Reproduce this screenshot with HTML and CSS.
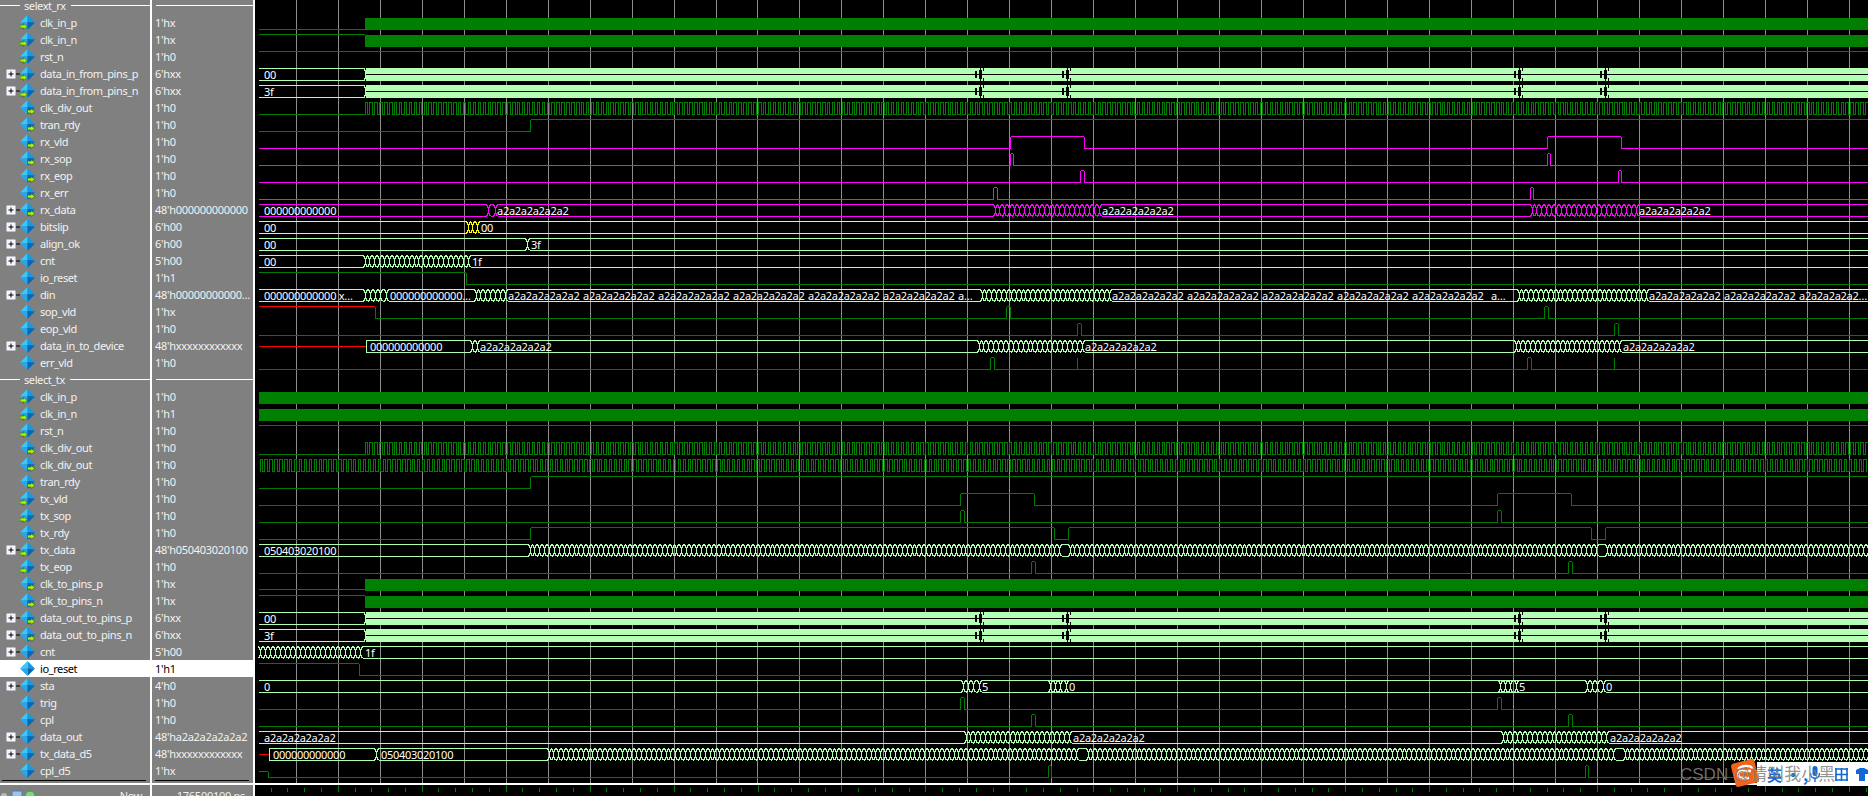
FILE: index.html
```html
<!DOCTYPE html>
<html lang="en">
<head>
<meta charset="utf-8">
<title>Wave</title>
<link rel="stylesheet" href="styles.css">
</head>
<body>
<svg class="defs" aria-hidden="true">
  <symbol id="dia" viewBox="0 0 15 15">
    <polygon points="0,7.5 7.5,0 7.5,7" fill="#3cc8f6"/>
    <polygon points="7.5,0 15,7.5 7.5,7" fill="#129ae2"/>
    <polygon points="0,7.5 7.5,7 7.5,15" fill="#28a6e8"/>
    <polygon points="7.5,7 15,7.5 7.5,15" fill="#0567b6"/>
  </symbol>
  <symbol id="in" viewBox="0 0 15 15">
    <use href="#dia" width="15" height="15"/>
    <polygon points="0,10 3.5,10 3.5,8.5 7.5,11.5 3.5,14.5 3.5,13 0,13" fill="#a8f010" stroke="#2d5a10" stroke-width=".6"/>
  </symbol>
  <symbol id="out" viewBox="0 0 15 15">
    <use href="#dia" width="15" height="15"/>
    <polygon points="7.5,10 11,10 11,8.5 15,11.5 11,14.5 11,13 7.5,13" fill="#a8f010" stroke="#2d5a10" stroke-width=".6"/>
  </symbol>
  <symbol id="plus" viewBox="0 0 14 10">
    <rect x=".5" y=".5" width="9" height="9" rx="1" fill="#f4f6fb" stroke="#b9bdc8"/>
    <path d="M2.5 5H7.5M5 2.5V7.5M10 5H14" stroke="#000" fill="none"/>
  </symbol>
</svg>

<div class="app">
  <section class="pane names">
    <div class="list">
      <div class="row hdr"><span>selext_rx</span></div>
      <div class="row"><i class="exp"></i><svg class="ico"><use href="#in"/></svg><span>clk_in_p</span></div>
      <div class="row"><i class="exp"></i><svg class="ico"><use href="#in"/></svg><span>clk_in_n</span></div>
      <div class="row"><i class="exp"></i><svg class="ico"><use href="#in"/></svg><span>rst_n</span></div>
      <div class="row"><svg class="exp"><use href="#plus"/></svg><svg class="ico"><use href="#in"/></svg><span>data_in_from_pins_p</span></div>
      <div class="row"><svg class="exp"><use href="#plus"/></svg><svg class="ico"><use href="#in"/></svg><span>data_in_from_pins_n</span></div>
      <div class="row"><i class="exp"></i><svg class="ico"><use href="#out"/></svg><span>clk_div_out</span></div>
      <div class="row"><i class="exp"></i><svg class="ico"><use href="#out"/></svg><span>tran_rdy</span></div>
      <div class="row"><i class="exp"></i><svg class="ico"><use href="#out"/></svg><span>rx_vld</span></div>
      <div class="row"><i class="exp"></i><svg class="ico"><use href="#out"/></svg><span>rx_sop</span></div>
      <div class="row"><i class="exp"></i><svg class="ico"><use href="#out"/></svg><span>rx_eop</span></div>
      <div class="row"><i class="exp"></i><svg class="ico"><use href="#out"/></svg><span>rx_err</span></div>
      <div class="row"><svg class="exp"><use href="#plus"/></svg><svg class="ico"><use href="#out"/></svg><span>rx_data</span></div>
      <div class="row"><svg class="exp"><use href="#plus"/></svg><svg class="ico"><use href="#dia"/></svg><span>bitslip</span></div>
      <div class="row"><svg class="exp"><use href="#plus"/></svg><svg class="ico"><use href="#dia"/></svg><span>align_ok</span></div>
      <div class="row"><svg class="exp"><use href="#plus"/></svg><svg class="ico"><use href="#dia"/></svg><span>cnt</span></div>
      <div class="row"><i class="exp"></i><svg class="ico"><use href="#dia"/></svg><span>io_reset</span></div>
      <div class="row"><svg class="exp"><use href="#plus"/></svg><svg class="ico"><use href="#dia"/></svg><span>din</span></div>
      <div class="row"><i class="exp"></i><svg class="ico"><use href="#dia"/></svg><span>sop_vld</span></div>
      <div class="row"><i class="exp"></i><svg class="ico"><use href="#dia"/></svg><span>eop_vld</span></div>
      <div class="row"><svg class="exp"><use href="#plus"/></svg><svg class="ico"><use href="#dia"/></svg><span>data_in_to_device</span></div>
      <div class="row"><i class="exp"></i><svg class="ico"><use href="#dia"/></svg><span>err_vld</span></div>
      <div class="row hdr"><span>select_tx</span></div>
      <div class="row"><i class="exp"></i><svg class="ico"><use href="#in"/></svg><span>clk_in_p</span></div>
      <div class="row"><i class="exp"></i><svg class="ico"><use href="#in"/></svg><span>clk_in_n</span></div>
      <div class="row"><i class="exp"></i><svg class="ico"><use href="#in"/></svg><span>rst_n</span></div>
      <div class="row"><i class="exp"></i><svg class="ico"><use href="#out"/></svg><span>clk_div_out</span></div>
      <div class="row"><i class="exp"></i><svg class="ico"><use href="#out"/></svg><span>clk_div_out</span></div>
      <div class="row"><i class="exp"></i><svg class="ico"><use href="#out"/></svg><span>tran_rdy</span></div>
      <div class="row"><i class="exp"></i><svg class="ico"><use href="#in"/></svg><span>tx_vld</span></div>
      <div class="row"><i class="exp"></i><svg class="ico"><use href="#in"/></svg><span>tx_sop</span></div>
      <div class="row"><i class="exp"></i><svg class="ico"><use href="#out"/></svg><span>tx_rdy</span></div>
      <div class="row"><svg class="exp"><use href="#plus"/></svg><svg class="ico"><use href="#in"/></svg><span>tx_data</span></div>
      <div class="row"><i class="exp"></i><svg class="ico"><use href="#in"/></svg><span>tx_eop</span></div>
      <div class="row"><i class="exp"></i><svg class="ico"><use href="#out"/></svg><span>clk_to_pins_p</span></div>
      <div class="row"><i class="exp"></i><svg class="ico"><use href="#out"/></svg><span>clk_to_pins_n</span></div>
      <div class="row"><svg class="exp"><use href="#plus"/></svg><svg class="ico"><use href="#out"/></svg><span>data_out_to_pins_p</span></div>
      <div class="row"><svg class="exp"><use href="#plus"/></svg><svg class="ico"><use href="#out"/></svg><span>data_out_to_pins_n</span></div>
      <div class="row"><svg class="exp"><use href="#plus"/></svg><svg class="ico"><use href="#dia"/></svg><span>cnt</span></div>
      <div class="row sel"><i class="exp"></i><svg class="ico"><use href="#dia"/></svg><span>io_reset</span></div>
      <div class="row"><svg class="exp"><use href="#plus"/></svg><svg class="ico"><use href="#dia"/></svg><span>sta</span></div>
      <div class="row"><i class="exp"></i><svg class="ico"><use href="#dia"/></svg><span>trig</span></div>
      <div class="row"><i class="exp"></i><svg class="ico"><use href="#dia"/></svg><span>cpl</span></div>
      <div class="row"><svg class="exp"><use href="#plus"/></svg><svg class="ico"><use href="#dia"/></svg><span>data_out</span></div>
      <div class="row"><svg class="exp"><use href="#plus"/></svg><svg class="ico"><use href="#dia"/></svg><span>tx_data_d5</span></div>
      <div class="row"><i class="exp"></i><svg class="ico"><use href="#dia"/></svg><span>cpl_d5</span></div>
    </div>
    <div class="scroll"></div>
    <div class="band"></div>
    <div class="foot">
      <svg class="status" viewBox="0 0 36 11">
        <circle cx="4" cy="6" r="3" fill="#b8b8b8"/>
        <rect x="12" y="1" width="10" height="10" fill="#9cc4ea" stroke="#4a78b0"/>
        <circle cx="30" cy="6" r="5" fill="#7ed67e" stroke="#3e9c3e"/>
      </svg>
      <span>Now</span>
    </div>
  </section>

  <section class="pane values">
    <div class="list">
      <div class="row hdr"></div>
      <div class="row">1'hx</div>
      <div class="row">1'hx</div>
      <div class="row">1'h0</div>
      <div class="row">6'hxx</div>
      <div class="row">6'hxx</div>
      <div class="row">1'h0</div>
      <div class="row">1'h0</div>
      <div class="row">1'h0</div>
      <div class="row">1'h0</div>
      <div class="row">1'h0</div>
      <div class="row">1'h0</div>
      <div class="row">48'h000000000000</div>
      <div class="row">6'h00</div>
      <div class="row">6'h00</div>
      <div class="row">5'h00</div>
      <div class="row">1'h1</div>
      <div class="row">48'h00000000000...</div>
      <div class="row">1'hx</div>
      <div class="row">1'h0</div>
      <div class="row">48'hxxxxxxxxxxxx</div>
      <div class="row">1'h0</div>
      <div class="row hdr"></div>
      <div class="row">1'h0</div>
      <div class="row">1'h1</div>
      <div class="row">1'h0</div>
      <div class="row">1'h0</div>
      <div class="row">1'h0</div>
      <div class="row">1'h0</div>
      <div class="row">1'h0</div>
      <div class="row">1'h0</div>
      <div class="row">1'h0</div>
      <div class="row">48'h050403020100</div>
      <div class="row">1'h0</div>
      <div class="row">1'hx</div>
      <div class="row">1'hx</div>
      <div class="row">6'hxx</div>
      <div class="row">6'hxx</div>
      <div class="row">5'h00</div>
      <div class="row sel">1'h1</div>
      <div class="row">4'h0</div>
      <div class="row">1'h0</div>
      <div class="row">1'h0</div>
      <div class="row">48'ha2a2a2a2a2a2</div>
      <div class="row">48'hxxxxxxxxxxxx</div>
      <div class="row">1'hx</div>
    </div>
    <div class="scroll"></div>
    <div class="band"></div>
    <div class="foot end"><span>176500100 ps</span></div>
  </section>

  <section class="pane waves">
    <svg id="wave" class="wave" viewBox="255 0 1613 783" width="1613" height="783">
      <g id="traces"></g>
      <g class="labels">
        <text x="264" y="79">00</text>
        <text x="264" y="96">3f</text>
        <text x="264" y="215">000000000000</text>
        <text x="497" y="215">a2a2a2a2a2a2</text>
        <text x="1102" y="215">a2a2a2a2a2a2</text>
        <text x="1639" y="215">a2a2a2a2a2a2</text>
        <text x="264" y="232">00</text>
        <text x="481" y="232">00</text>
        <text x="264" y="249">00</text>
        <text x="531" y="249">3f</text>
        <text x="264" y="266">00</text>
        <text x="472" y="266">1f</text>
        <text x="264" y="300">000000000000 x…</text>
        <text x="390" y="300">000000000000…</text>
        <text x="508" y="300">a2a2a2a2a2a2</text>
        <text x="583" y="300">a2a2a2a2a2a2</text>
        <text x="658" y="300">a2a2a2a2a2a2</text>
        <text x="733" y="300">a2a2a2a2a2a2</text>
        <text x="808" y="300">a2a2a2a2a2a2</text>
        <text x="883" y="300">a2a2a2a2a2a2</text>
        <text x="958" y="300">a…</text>
        <text x="1112" y="300">a2a2a2a2a2a2</text>
        <text x="1187" y="300">a2a2a2a2a2a2</text>
        <text x="1262" y="300">a2a2a2a2a2a2</text>
        <text x="1337" y="300">a2a2a2a2a2a2</text>
        <text x="1412" y="300">a2a2a2a2a2a2</text>
        <text x="1491" y="300">a…</text>
        <text x="1649" y="300">a2a2a2a2a2a2</text>
        <text x="1724" y="300">a2a2a2a2a2a2</text>
        <text x="1799" y="300">a2a2a2a2a2…</text>
        <text x="370" y="351">000000000000</text>
        <text x="480" y="351">a2a2a2a2a2a2</text>
        <text x="1085" y="351">a2a2a2a2a2a2</text>
        <text x="1623" y="351">a2a2a2a2a2a2</text>
        <text x="264" y="555">050403020100</text>
        <text x="264" y="623">00</text>
        <text x="264" y="640">3f</text>
        <text x="365" y="657">1f</text>
        <text x="264" y="691">0</text>
        <text x="982" y="691">5</text>
        <text x="1069" y="691">0</text>
        <text x="1519" y="691">5</text>
        <text x="1606" y="691">0</text>
        <text x="264" y="742">a2a2a2a2a2a2</text>
        <text x="1073" y="742">a2a2a2a2a2a2</text>
        <text x="1610" y="742">a2a2a2a2a2a2</text>
        <text x="273" y="759">000000000000</text>
        <text x="381" y="759">050403020100</text>
      </g>
    </svg>
    <div class="band"></div>
    <svg id="ticks" class="ticks" viewBox="255 785 1613 11" width="1613" height="11"></svg>
  </section>

  <div class="ime">
    <span class="ime-zh">英</span>
    <span class="ime-punc">·,</span>
    <svg class="ime-mic" viewBox="0 0 10 16"><rect x="2.5" y="0" width="5" height="10" rx="2.5" fill="#1068d8"/><path d="M0.5 7C0.5 14 9.5 14 9.5 7M5 12V16" stroke="#1068d8" fill="none" stroke-width="1.4"/></svg>
    <svg class="ime-grid" viewBox="0 0 13 13"><path d="M0 1H13M0 6.5H13M0 12H13M1 0V13M6.5 0V13M12 0V13" stroke="#1068d8" stroke-width="1.6" fill="none"/></svg>
    <svg class="ime-shirt" viewBox="0 0 12 13"><path d="M0 2L4 0H8L12 2V6H9V13H3V6H0Z" fill="#1068d8"/></svg>
  </div>
  <svg class="sogou" viewBox="0 0 30 30">
    <rect x="3" y="3" width="24" height="24" rx="3" fill="#f3621a" transform="rotate(-14 15 15)"/>
    <path d="M8 11C12 7 19 7 23 10M21 13H12C7 13 7 20 12 20H19" stroke="#fff" stroke-width="2.4" fill="none"/>
  </svg>
  <div class="mark">CSDN @请叫我小黑</div>
</div>
<script src="script.js"></script>
</body>
</html>
```

FILE: styles.css
```css
* { box-sizing: border-box; }
html, body { margin: 0; height: 796px; overflow: hidden; background: #000; }
.defs { position: absolute; width: 0; height: 0; }
.app {
  position: relative;
  display: flex;
  width: 1868px;
  height: 796px;
  overflow: hidden;
  font-family: "Noto Sans", "Liberation Sans", sans-serif;
  font-size: 11px;
  color: #f2f2f2;
}
.pane { display: flex; flex-direction: column; height: 796px; overflow: hidden; }
.names { width: 152px; flex: none; background: #808080; border-right: 2px solid #fff; letter-spacing: -0.4px; }
.values { width: 103px; flex: none; background: #808080; border-right: 2px solid #fff; letter-spacing: -0.28px; }
.waves { flex: 1; background: #000; }
.list { height: 779px; flex: none; }
.row {
  display: flex;
  align-items: center;
  height: 17px;
  white-space: nowrap;
  overflow: hidden;
}
.row:first-child { height: 14px; padding-bottom: 3px; line-height: 11px; }
.names .row { padding-left: 6px; }
.values .row { padding-left: 3px; }
.row.sel { background: #fff; color: #000; }
.exp { display: block; width: 14px; height: 10px; flex: none; }
.ico { display: block; width: 15px; height: 15px; flex: none; margin-right: 5px; }
.names .hdr { gap: 4px; padding-left: 0; }
.hdr::before { content: ""; width: 20px; height: 1px; background: #fff; }
.hdr::after { content: ""; flex: 1; height: 1px; margin-left: 1px; background: #fff; }
.values .hdr { gap: 0; }
.values .hdr::before { width: 0; }
.scroll { flex: none; height: 1px; margin: 1px 4px 2px 2px; background: #000; }
.values .scroll { margin-left: 3px; }
.band { flex: none; height: 2px; background: #fff; }
.foot {
  flex: 1;
  display: flex;
  justify-content: space-between;
  align-items: flex-start;
  padding-right: 8px;
  line-height: 22px;
  overflow: hidden;
}
.foot.end { justify-content: flex-end; }
.status { display: block; width: 36px; height: 11px; margin-top: 5px; }
.wave, .ticks { display: block; flex: none; }
.labels text {
  font-family: "Noto Sans", "Liberation Sans", sans-serif;
  font-size: 11px;
  letter-spacing: -0.28px;
  fill: #fff;
}
.ime {
  position: absolute;
  left: 1757px;
  top: 762px;
  width: 111px;
  height: 24px;
  padding-left: 10px;
  display: flex;
  align-items: center;
  background: #fff;
  color: #1068d8;
  font-family: "Noto Sans CJK SC", sans-serif;
  overflow: hidden;
}
.ime-zh { width: 27px; font-size: 15px; font-weight: 700; }
.ime-punc { width: 25px; font-size: 16px; font-weight: 700; letter-spacing: 2px; }
.ime-mic { display: block; width: 10px; height: 16px; margin-right: 15px; flex: none; }
.ime-grid { display: block; width: 13px; height: 13px; margin-right: 8px; flex: none; }
.ime-shirt { display: block; width: 12px; height: 13px; flex: none; }
.sogou { position: absolute; left: 1730px; top: 758px; width: 30px; height: 30px; }
.mark {
  position: absolute;
  left: 1680px;
  top: 765px;
  font-family: "Liberation Sans", "Noto Sans CJK SC", sans-serif;
  font-size: 17px;
  line-height: 20px;
  white-space: nowrap;
  color: rgba(128, 128, 128, 0.85);
}
```

FILE: script.js
```js
(function () {
  var NS = "http://www.w3.org/2000/svg";
  var L = 259, R = 1868, D = 537;
  var GREEN = "#007c00", BUS = "#aeffae", MAG = "#ff00ff", YEL = "#ffff00", RED = "#ff0000";
  var strokes = {}, fills = {}, grid = "";

  function px(x) { return Math.floor(x) + 0.5; }
  function top(k) { return 17 * k + 0.5; }
  function add(color, d) { strokes[color] = (strokes[color] || "") + d; }
  function fill(color, x, y, w, h) {
    fills[color] = (fills[color] || "") + "M" + x + " " + y + "h" + w + "v" + h + "h" + (-w) + "z";
  }

  /* One-bit signal: steps between its two levels at the given x positions. */
  function digital(color, k, high, edges, from) {
    var T = top(k), B = T + 12, x = from === undefined ? L : from;
    var d = "M" + x + " " + (high ? T : B);
    edges.forEach(function (e) {
      var p = px(e);
      if (high) d += "L" + (p - 1) + " " + T + "L" + p + " " + (T + 1) + "L" + p + " " + B;
      else d += "L" + p + " " + B + "L" + p + " " + (T + 1) + "L" + (p + 1) + " " + T;
      high = !high;
    });
    add(color, d + "L" + R + " " + (high ? T : B));
  }

  function clock(k, from, period) {
    var T = top(k), B = T + 12, d = "M" + from + " " + B;
    for (var x = from; x < R; x += period) {
      d += "L" + px(x) + " " + B + "L" + px(x) + " " + T + "L" + px(x + period / 2) + " " + T + "L" + px(x + period / 2) + " " + B;
    }
    add("#008000", d);
  }

  /* Multi-bit signal: two rails that pinch together at every transition. */
  function bus(color, k, ranges, from, to) {
    var T = top(k), B = T + 12;
    var s = from === undefined ? L : from, e = to === undefined ? R : to;
    var d = "", last = s;
    if (s !== L) d += "M" + (s + 1) + " " + T + "L" + s + " " + (T + 2) + "V" + (B - 2) + "L" + (s + 1) + " " + B;
    function rails(a, b) {
      if (b > a) d += "M" + a + " " + T + "H" + b + "M" + a + " " + B + "H" + b;
    }
    function pinch(x, dir) {
      d += "M" + (x + 2 * dir) + " " + T + "L" + (x + dir) + " " + (T + 2) + "L" + x + " " + (T + 4);
      d += "V" + (B - 4) + "L" + (x + dir) + " " + (B - 2) + "L" + (x + 2 * dir) + " " + B;
    }
    ranges.forEach(function (r) {
      var n = Math.round((r[1] - r[0]) / 4.9);
      var step = n ? (r[1] - r[0]) / n : 0;
      for (var i = 0; i <= n; i++) {
        var x = px(r[0] + i * step);
        rails(last, x - 2);
        pinch(x, -1);
        pinch(x, 1);
        last = x + 2;
      }
    });
    if (to !== undefined) {
      rails(last, e - 1);
      d += "M" + (e - 1) + " " + T + "L" + e + " " + (T + 2) + "V" + (B - 2) + "L" + (e - 1) + " " + B;
    } else {
      rails(last, e);
    }
    add(color, d);
  }

  /* Pair of chatter ranges: the first burst and the same burst one frame later. */
  function twice(a, b) { return [[a, b], [a + D, b + D]]; }

  function solidBar(k, from) {
    fill("#008000", from, 17 * k + 1, R - from, 12);
  }

  function packed(k) {
    var T = 17 * k;
    fill("#b3ffb3", 366, T, R - 366, 13);
    fill("#000", 366, T + 6, R - 366, 1);
    [975, 1062, 975 + D + 2, 1062 + D + 1].forEach(function (x) {
      fill("#000", x, T + 3, 2, 7);
      fill("#000", x + 4, T + 2, 3, 9);
      fill("#000", x + 5, T, 1, 2);
      fill("#000", x + 5, T + 11, 1, 2);
      fill("#000", x + 8, T, 1, 3);
      fill("#000", x + 8, T + 10, 1, 3);
    });
  }

  for (var g = 296.3 - 41.97; g < R; g += 41.97) {
    grid += "M" + px(g) + " 0V783";
  }

  /* selext_rx */
  add(GREEN, "M259 29.5H365M259 34.5H365");
  solidBar(1, 365); solidBar(2, 365);
  digital(GREEN, 3, true, []);
  bus(BUS, 4, [], L, 365); packed(4);
  bus(BUS, 5, [], L, 365); packed(5);
  add(GREEN, "M259 114.5H365"); clock(6, 365, 4.92);
  digital(GREEN, 7, false, [530]);
  digital(MAG, 8, false, [1010, 1084, 1547, 1621]);
  digital(MAG, 9, false, [1010, 1013, 1547, 1550]);
  digital(MAG, 10, false, [1080, 1084, 1618, 1621]);
  digital(MAG, 11, false, [993, 997, 1530, 1533]);
  bus(MAG, 12, [[488, 495]].concat(twice(995, 1099)));
  bus(YEL, 13, [[468, 477]]);
  bus(BUS, 14, [[527, 527]]);
  bus(BUS, 15, [[365, 468]]);
  digital(GREEN, 16, true, [466]);
  bus(BUS, 17, [[365, 386], [476, 505]].concat(twice(982, 1109)));
  digital(GREEN, 18, true, [375, 1006, 1010, 1544, 1548], 375);
  add(RED, "M259 306.5H375");
  digital(GREEN, 19, false, [1077, 1081, 1614, 1618]);
  add(RED, "M259 346.5H366");
  bus(BUS, 20, [[472, 477]].concat(twice(979, 1082)), 366);
  digital(GREEN, 21, false, [990, 994, 1527, 1531]);
  add(GREEN, "M1077.5 357.5V369.5M1614.5 357.5V369.5");

  /* select_tx */
  solidBar(23, L); solidBar(24, L);
  digital(GREEN, 25, true, []);
  add(GREEN, "M259 454.5H365"); clock(26, 365, 4.92);
  clock(27, 260, 4.92);
  digital(GREEN, 28, false, [530]);
  digital(GREEN, 29, false, [960, 1034, 1497, 1571]);
  digital(GREEN, 30, false, [960, 964, 1497, 1501]);
  digital(GREEN, 31, false, [530, 1054, 1068, 1591, 1605]);
  bus(BUS, 32, [[530, 1059], [1070, 1596], [1607, 1868]]);
  digital(GREEN, 33, false, [1031, 1035, 1568, 1572]);
  add(GREEN, "M259 589.5H365M259 595.5H365");
  solidBar(34, 365); solidBar(35, 365);
  bus(BUS, 36, [], L, 365); packed(36);
  bus(BUS, 37, [], L, 365); packed(37);
  bus(BUS, 38, [[260, 360]]);
  digital(GREEN, 39, true, [359]);
  bus(BUS, 40, twice(963, 979).concat(twice(1050, 1066)));
  digital(GREEN, 41, false, [960, 964, 1497, 1501]);
  digital(GREEN, 42, false, [1031, 1035, 1568, 1572]);
  bus(BUS, 43, twice(966, 1069));
  add(RED, "M259 754.5H269");
  bus(BUS, 44, [[376, 377], [549, 1076], [1088, 1613], [1625, 1868]], 269);
  add(RED, "M259 771.5H268");
  add(GREEN, "M268.5 771.5V777.5");
  digital(GREEN, 45, false, [1048, 1051, 1585, 1588], 268);

  var traces = document.getElementById("traces");
  function path(d, attrs) {
    var p = document.createElementNS(NS, "path");
    p.setAttribute("d", d);
    for (var a in attrs) p.setAttribute(a, attrs[a]);
    p.setAttribute("shape-rendering", "crispEdges");
    traces.appendChild(p);
  }
  path(grid, { stroke: "#8c8c8c", fill: "none" });
  var c;
  /* Bars first, then the black notches that are cut into them. */
  ["#008000", "#b3ffb3", "#000"].forEach(function (col) {
    if (fills[col]) path(fills[col], { fill: col, stroke: "none" });
  });
  for (c in strokes) path(strokes[c], { stroke: c, fill: "none" });

  var t = "";
  for (var i = 0; 254.3 + i * 16.79 < R; i++) {
    var x = px(254.3 + i * 16.79);
    t += "M" + x + (i % 5 === 0 ? " 785" : " 788") + "V792";
  }
  var ticks = document.getElementById("ticks");
  var tp = document.createElementNS(NS, "path");
  tp.setAttribute("d", t);
  tp.setAttribute("stroke", "#008000");
  tp.setAttribute("fill", "none");
  tp.setAttribute("shape-rendering", "crispEdges");
  ticks.appendChild(tp);
})();
```
